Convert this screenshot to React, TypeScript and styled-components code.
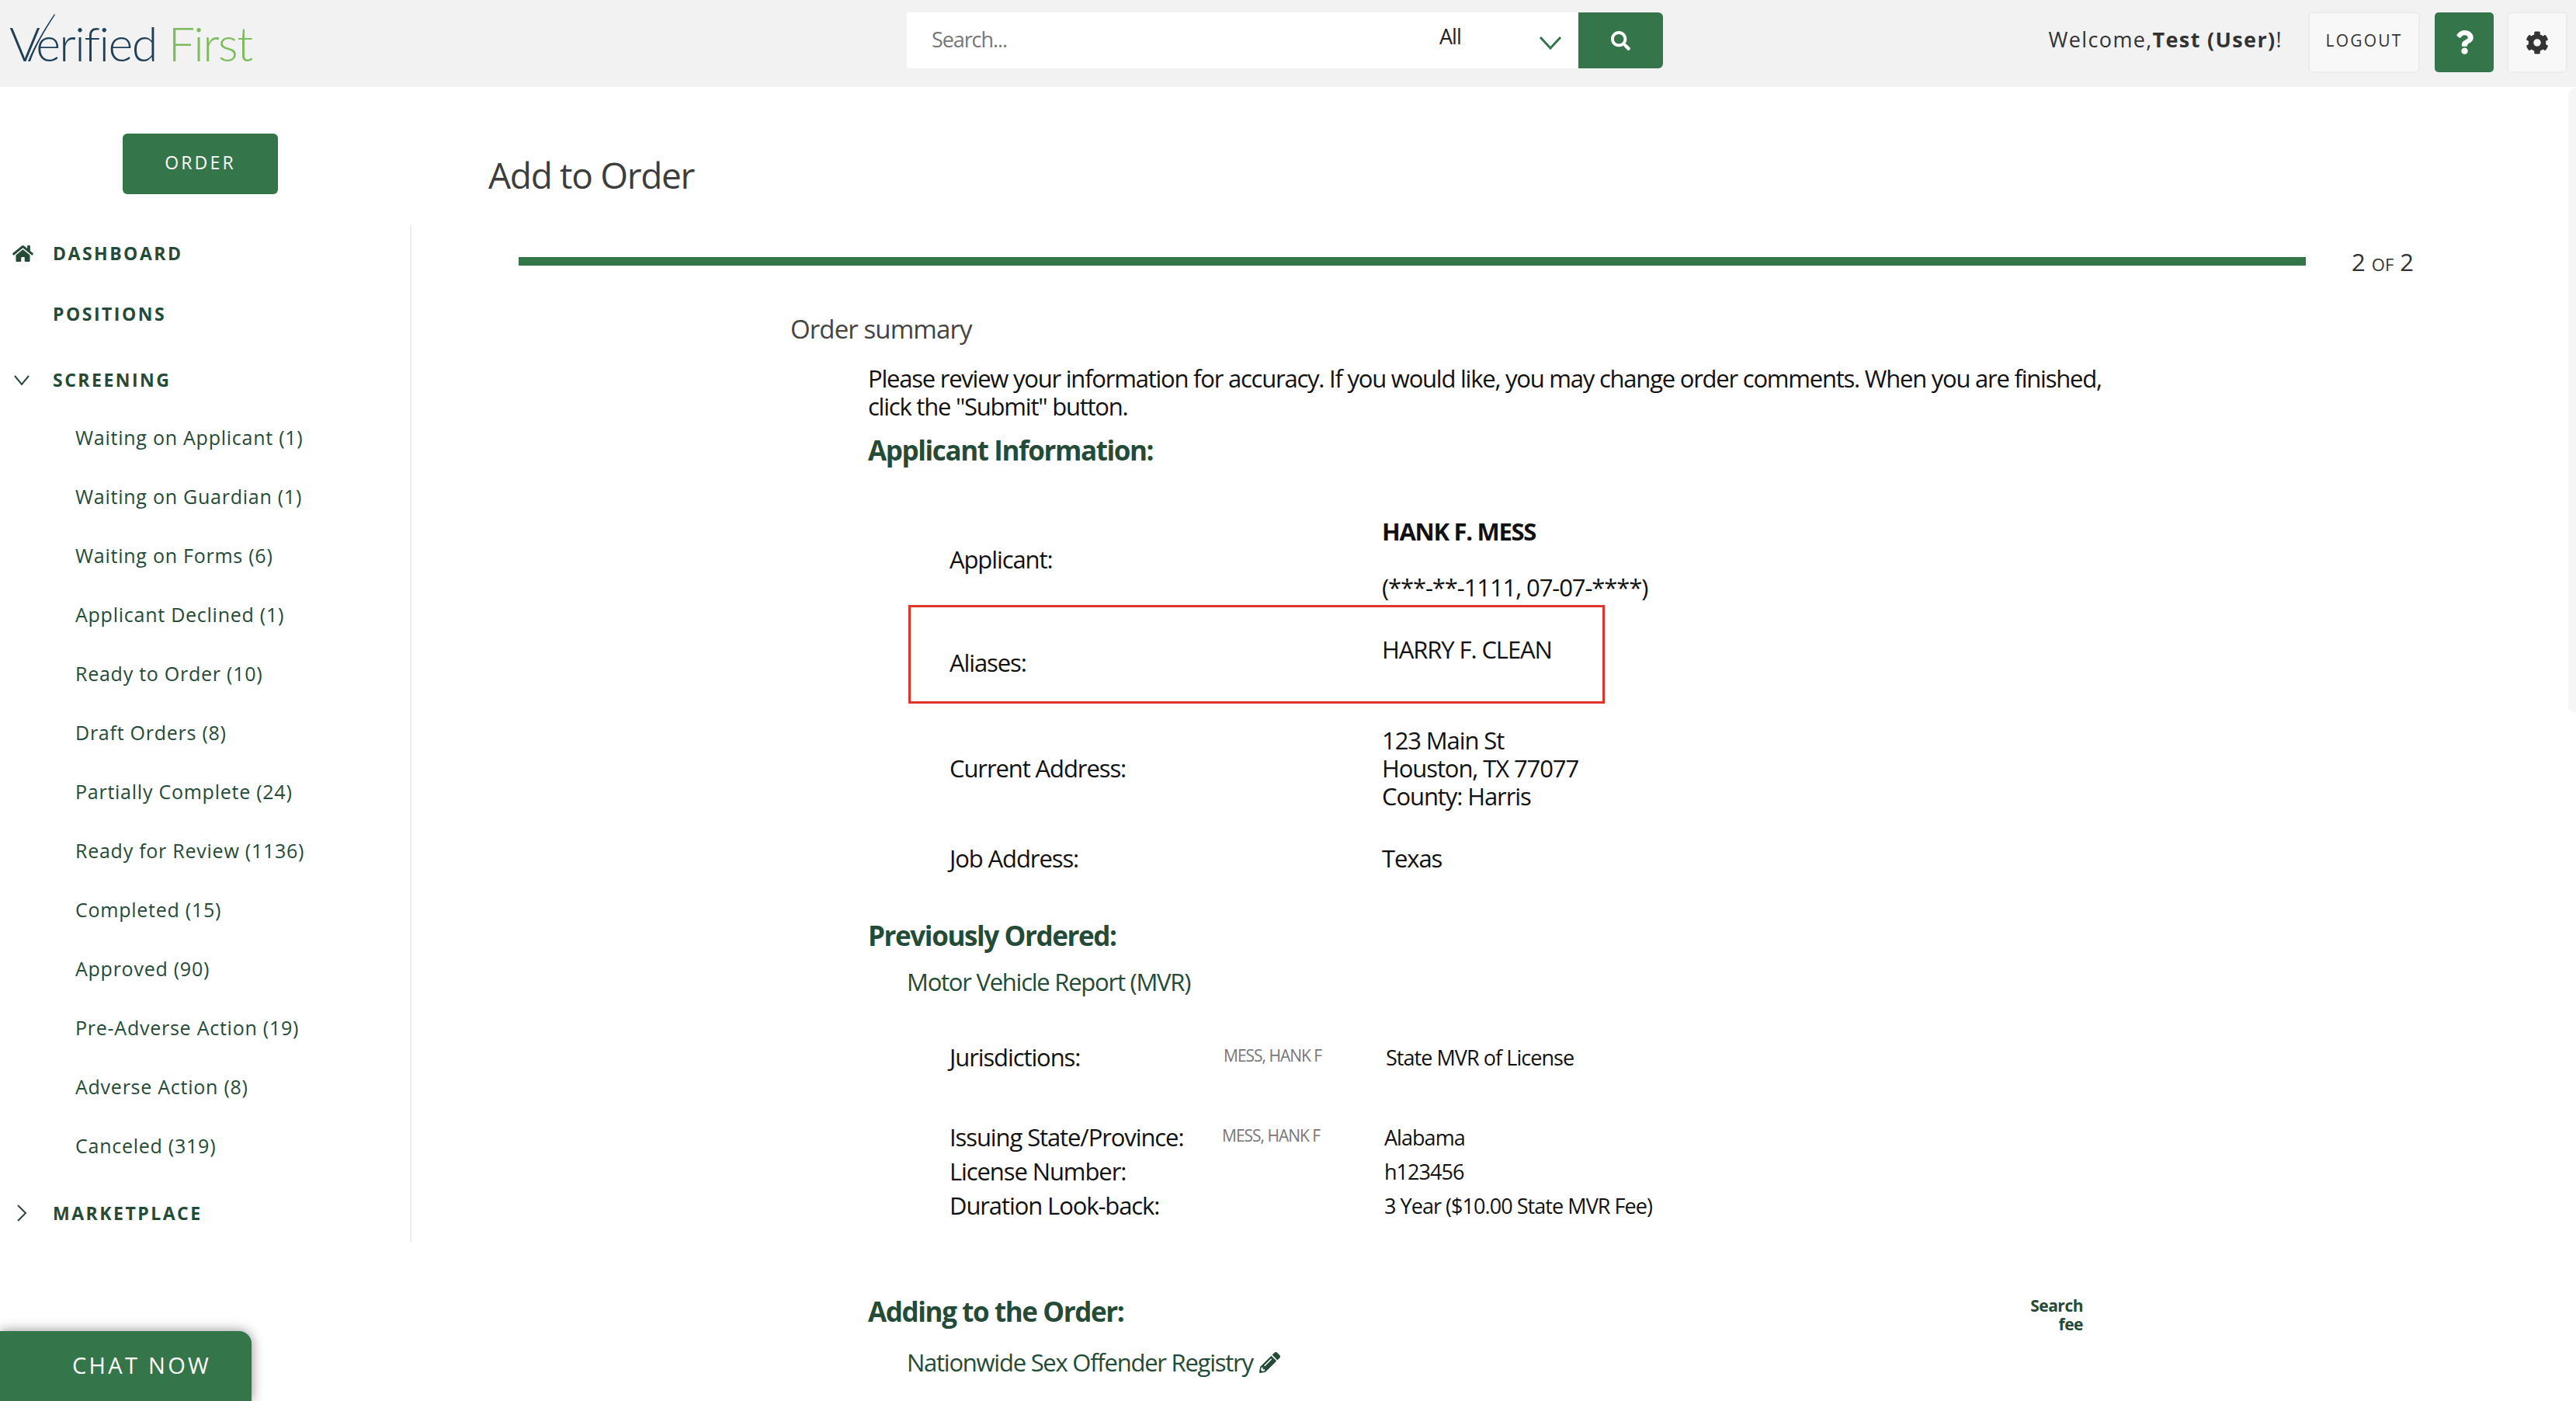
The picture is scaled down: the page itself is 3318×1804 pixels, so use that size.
import React from "react";
import styled, { createGlobalStyle } from "styled-components";
import { FaHome, FaSearch, FaQuestion, FaCog, FaPencilAlt, FaInfoCircle } from "react-icons/fa";

const GREEN = "#35754a";
const DARK = "#244a38";
const FONT = `"Open Sans", "Noto Sans", "Liberation Sans", sans-serif`;

const Global = createGlobalStyle`
  html, body { margin: 0; padding: 0; height: 1804px; overflow: hidden; background: #fff; }
  body { font-family: ${FONT}; color: #111; }
  #root { height: 1804px; position: relative; overflow: hidden; }
  * { box-sizing: border-box; }
`;

const Header = styled.header`
  display: flex; align-items: flex-start; height: 112px; background: #f2f2f2; padding: 15px 11px 0 0;
`;
const Logo = styled.div`
  position: relative; width: 1168px; height: 70px; padding: 8px 0 0 12px;
  font-family: Lato, ${FONT}; font-weight: 300; font-size: 61px; line-height: 66px; letter-spacing: -1.6px; color: #1d3f57; white-space: nowrap;
`;
const LogoFirst = styled.span`color: #7dbb5e;`;
const LogoTick = styled.svg`position: absolute; left: 14px; top: 2px; width: 60px; height: 70px;`;
const SearchBar = styled.div`
  display: flex; align-items: stretch; width: 974px; height: 72px; margin-top: 1px; background: #fff; border-radius: 0 6px 6px 0;
`;
const SearchText = styled.div`
  flex: 1; padding: 0 0 0 32px; line-height: 70px; font-size: 27px; letter-spacing: -1.1px; color: #777;
`;
const ScopeSelect = styled.div`
  display: flex; width: 179px; position: relative; font-size: 27px; line-height: 62px; letter-spacing: -1px; color: #222;
`;
const ScopeChevron = styled.svg`position: absolute; left: 128px; top: 30px; width: 30px; height: 18px;`;
const SearchButton = styled.div`
  display: flex; align-items: center; justify-content: center; width: 109px; background: ${GREEN}; color: #fff; border-radius: 0 6px 6px 0; font-size: 25px;
`;
const Welcome = styled.div`
  margin: 10px 33px 0 auto; font-size: 27px; line-height: 52px; letter-spacing: 1.35px; color: #333; white-space: nowrap;
  b { font-weight: 700; }
`;
const Logout = styled.div`
  width: 144px; height: 79px; margin-right: 19px; border: 2px solid #ececec; border-radius: 6px; background: #f8f8f8;
  text-align: center; font-size: 21px; line-height: 70px; letter-spacing: 2.2px; color: #333;
`;
const HelpButton = styled.div`
  display: flex; align-items: center; justify-content: center; width: 76px; height: 77px; margin: 1px 17px 0 0; background: ${GREEN}; color: #fff; border-radius: 5px; font-size: 31px;
`;
const GearButton = styled.div`
  display: flex; align-items: center; justify-content: center; width: 78px; height: 79px; border: 2px solid #ececec; border-radius: 6px; background: #f8f8f8; color: #333; font-size: 30px;
`;

const Body = styled.div`display: flex; align-items: flex-start;`;
const Sidebar = styled.aside`width: 530px; flex: none;`;
const OrderArea = styled.div`height: 178px; padding: 60px 0 0 158px;`;
const OrderButton = styled.div`
  width: 200px; height: 78px; background: ${GREEN}; color: #fff; border-radius: 6px;
  text-align: center; font-size: 23px; line-height: 74px; letter-spacing: 3.2px;
`;
const Nav = styled.nav`height: 1310px; padding-top: 16px; border-right: 2px solid #eee;`;
const NavHead = styled.div<{ $gap?: number }>`
  display: flex; align-items: center; height: 40px; margin-top: ${(p) => p.$gap ?? 0}px; padding-left: 16px;
  font-size: 23px; font-weight: 700; letter-spacing: 2.5px; color: ${DARK};
`;
const NavIcon = styled.span`display: flex; align-items: center; width: 52px; font-size: 27px; letter-spacing: 0;`;
const SubList = styled.div`margin-top: 16px;`;
const SubItem = styled.div`
  height: 76px; line-height: 76px; padding-left: 97px; font-size: 25px; letter-spacing: 0.75px; color: ${DARK}; white-space: nowrap;
`;

const Main = styled.main`flex: 1; min-width: 0;`;
const Title = styled.h1`
  margin: 83px 0 0 99px; font-size: 46px; line-height: 60px; font-weight: 400; letter-spacing: -1.3px; color: #3d3d3d;
`;
const ProgressRow = styled.div`display: flex; align-items: center; height: 40px; margin: 61px 0 0 138px;`;
const ProgressBar = styled.div`width: 2302px; height: 11px; background: ${GREEN};`;
const ProgressText = styled.div`
  margin-left: 59px; font-size: 31px; line-height: 40px; color: #333; position: relative; top: 2px; white-space: nowrap;
  small { font-size: 22px; }
`;
const Subtitle = styled.h2`
  margin: 46px 0 0 488px; font-size: 33px; line-height: 44px; font-weight: 400; letter-spacing: -0.9px; color: #444;
`;
const Content = styled.div`margin: 23px 0 0 588px; width: 1800px;`;
const Intro = styled.p`
  margin: 0; width: 1600px; font-size: 31px; line-height: 36px; letter-spacing: -1.23px; color: #111;
`;
const SectionHeading = styled.h3<{ $gap: number }>`
  margin: ${(p) => p.$gap}px 0 0; font-size: 35px; line-height: 44px; font-weight: 700; letter-spacing: -1.4px; color: ${DARK};
`;
const DetailRow = styled.div<{ $gap: number }>`
  display: grid; grid-template-columns: 557px 1fr; align-items: center; margin-top: ${(p) => p.$gap}px; padding-left: 105px;
  font-size: 31px; line-height: 36px; letter-spacing: -1.1px; color: #111;
`;
const Highlight = styled.div`
  display: grid; grid-template-columns: 557px 1fr; align-items: start; width: 897px; height: 127px; margin: 5px 0 0 52px; padding-left: 50px;
  border: 3px solid #e0342a; font-size: 31px; line-height: 36px; letter-spacing: -1.1px; color: #111;
`;
const HighlightLabel = styled.div`margin-top: 53px;`;
const HighlightValue = styled.div`margin-top: 36px;`;
const StrongLine = styled.div`font-weight: 700; height: 72px; letter-spacing: -1.3px;`;
const ProductLink = styled.div<{ $gap: number }>`
  display: flex; align-items: center; margin: ${(p) => p.$gap}px 0 0 50px; font-size: 31px; line-height: 40px; letter-spacing: -1.25px; color: ${DARK};
`;
const PencilIcon = styled.span`display: inline-flex; margin-left: 8px; font-size: 27px;`;
const OrderRow = styled.div<{ $gap: number; $tag: number; $val: number }>`
  display: grid; grid-template-columns: ${(p) => p.$tag}px ${(p) => p.$val}px 1fr; align-items: center; height: 44px; margin-top: ${(p) => p.$gap}px; padding-left: 105px;
`;
const OrderLabel = styled.div`font-size: 31px; letter-spacing: -1.1px; color: #111; white-space: nowrap;`;
const OrderTag = styled.div`font-size: 21px; letter-spacing: -1px; color: #777; white-space: nowrap; position: relative; top: -2px;`;
const OrderValue = styled.div`font-size: 27px; letter-spacing: -0.95px; color: #111; white-space: nowrap;`;
const AddingHead = styled.div`display: grid; grid-template-columns: 1431px 134px 135px; margin-top: 93px;`;
const FeeHead = styled.div`
  position: relative; margin-top: 2px; text-align: right; font-size: 21px; line-height: 24px; font-weight: 700; letter-spacing: -0.5px; color: ${DARK};
`;
const FeeInfo = styled.span`position: absolute; left: 38px; top: 1px; color: ${GREEN}; font-size: 28px; display: flex;`;

const ChatNow = styled.div`
  position: absolute; left: 0; bottom: 0; width: 324px; height: 90px; background: ${GREEN}; color: #fff;
  border-radius: 0 16px 0 0; box-shadow: 0 0 16px rgba(0, 0, 0, 0.45); padding-left: 93px;
  font-size: 29px; line-height: 88px; letter-spacing: 3.3px; white-space: nowrap;
`;
const ScrollThumb = styled.div`
  position: absolute; right: 0; top: 113px; width: 10px; height: 805px; background: #f6f6f6; border-radius: 10px 0 0 10px;
`;

const Chevron = ({ d }: { d: string }) => (
  <svg width="24" height="24" viewBox="0 0 24 24" fill="none" stroke={DARK} strokeWidth="2">
    <path d={d} />
  </svg>
);

const queues = [
  "Waiting on Applicant (1)", "Waiting on Guardian (1)", "Waiting on Forms (6)", "Applicant Declined (1)",
  "Ready to Order (10)", "Draft Orders (8)", "Partially Complete (24)", "Ready for Review (1136)",
  "Completed (15)", "Approved (90)", "Pre-Adverse Action (19)", "Adverse Action (8)", "Canceled (319)",
];

export default function App() {
  return (
    <>
      <Global />
      <Header>
        <Logo>
          <LogoTick viewBox="0 0 60 70" fill="none">
            <path d="M56 1 C42 22 30 42 22 62 L25 62 C32 42 44 22 57 2 Z" fill="#1d3f57" />
          </LogoTick>
          Verified <LogoFirst>First</LogoFirst>
        </Logo>
        <SearchBar>
          <SearchText>Search...</SearchText>
          <ScopeSelect>
            All
            <ScopeChevron viewBox="0 0 30 18" fill="none" stroke={GREEN} strokeWidth="3">
              <path d="M2 2 L15 16 L28 2" />
            </ScopeChevron>
          </ScopeSelect>
          <SearchButton><FaSearch /></SearchButton>
        </SearchBar>
        <Welcome>Welcome,<b>Test (User)</b>!</Welcome>
        <Logout>LOGOUT</Logout>
        <HelpButton><FaQuestion /></HelpButton>
        <GearButton><FaCog /></GearButton>
      </Header>
      <Body>
        <Sidebar>
          <OrderArea><OrderButton>ORDER</OrderButton></OrderArea>
          <Nav>
            <NavHead><NavIcon><FaHome /></NavIcon>DASHBOARD</NavHead>
            <NavHead $gap={38}><NavIcon />POSITIONS</NavHead>
            <NavHead $gap={45}><NavIcon><Chevron d="M3 7 L12 18 L21 7" /></NavIcon>SCREENING</NavHead>
            <SubList>
              {queues.map((q) => <SubItem key={q}>{q}</SubItem>)}
            </SubList>
            <NavHead $gap={29}><NavIcon><Chevron d="M7 2 L17 12 L7 22" /></NavIcon>MARKETPLACE</NavHead>
          </Nav>
        </Sidebar>
        <Main>
          <Title>Add to Order</Title>
          <ProgressRow>
            <ProgressBar />
            <ProgressText>2 <small>OF</small> 2</ProgressText>
          </ProgressRow>
          <Subtitle>Order summary</Subtitle>
          <Content>
            <Intro>
              Please review your information for accuracy. If you would like, you may change order comments. When you are finished, click the "Submit" button.
            </Intro>
            <SectionHeading $gap={17}>Applicant Information:</SectionHeading>
            <DetailRow $gap={64}>
              <div>Applicant:</div>
              <div>
                <StrongLine>HANK F. MESS</StrongLine>
                <div>(***-**-1111, 07-07-****)</div>
              </div>
            </DetailRow>
            <Highlight>
              <HighlightLabel>Aliases:</HighlightLabel>
              <HighlightValue>HARRY F. CLEAN</HighlightValue>
            </Highlight>
            <DetailRow $gap={29}>
              <div>Current Address:</div>
              <div>
                <div>123 Main St</div>
                <div>Houston, TX 77077</div>
                <div>County: Harris</div>
              </div>
            </DetailRow>
            <DetailRow $gap={44}>
              <div>Job Address:</div>
              <div>Texas</div>
            </DetailRow>
            <SectionHeading $gap={60}>Previously Ordered:</SectionHeading>
            <ProductLink $gap={17}>Motor Vehicle Report (MVR)</ProductLink>
            <OrderRow $gap={55} $tag={353} $val={209}>
              <OrderLabel>Jurisdictions:</OrderLabel>
              <OrderTag>MESS, HANK F</OrderTag>
              <OrderValue>State MVR of License</OrderValue>
            </OrderRow>
            <OrderRow $gap={59} $tag={351} $val={209}>
              <OrderLabel>Issuing State/Province:</OrderLabel>
              <OrderTag>MESS, HANK F</OrderTag>
              <OrderValue>Alabama</OrderValue>
            </OrderRow>
            <OrderRow $gap={0} $tag={351} $val={209}>
              <OrderLabel>License Number:</OrderLabel>
              <span />
              <OrderValue>h123456</OrderValue>
            </OrderRow>
            <OrderRow $gap={0} $tag={351} $val={209}>
              <OrderLabel>Duration Look-back:</OrderLabel>
              <span />
              <OrderValue>3 Year ($10.00 State MVR Fee)</OrderValue>
            </OrderRow>
            <AddingHead>
              <SectionHeading $gap={0}>Adding to the Order:</SectionHeading>
              <FeeHead>Search<br />fee</FeeHead>
            </AddingHead>
            <ProductLink $gap={17}>Nationwide Sex Offender Registry<PencilIcon><FaPencilAlt /></PencilIcon></ProductLink>
          </Content>
        </Main>
      </Body>
      <ChatNow>CHAT NOW</ChatNow>
      <ScrollThumb />
    </>
  );
}
